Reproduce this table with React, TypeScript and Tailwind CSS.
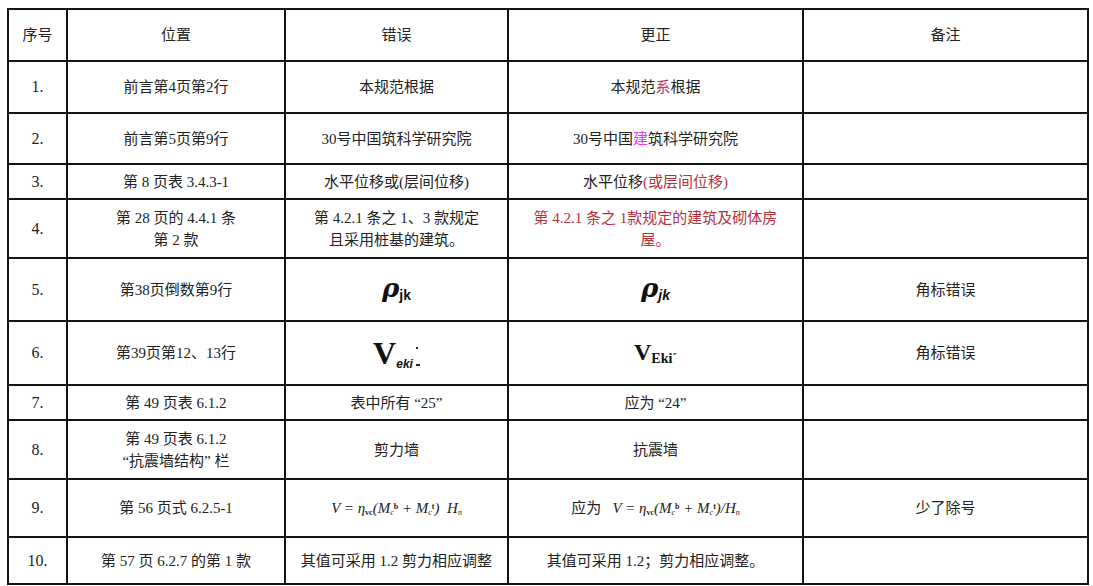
import React from 'react';

const red = 'text-[#b8303e]';

function Cell({ children, className = '' }: { children?: React.ReactNode; className?: string }) {
  return (
    <div className={`bg-white flex flex-col items-center justify-center text-center leading-[22px] ${className}`}>
      {children}
    </div>
  );
}

function Num({ n }: { n: string }) {
  return <Cell className="text-[16px] font-['Liberation_Serif',serif] text-[#222]">{n}</Cell>;
}

// V = η_vc (M_c^b + M_c^t) ... H_n, small italic serif
function ShearFormula({ slash }: { slash?: boolean }) {
  return (
    <span className="font-['Liberation_Serif',serif] italic text-[15px] text-[#222] whitespace-nowrap">
      V = η<sub className="text-[8px] not-italic font-bold">vc</sub>(M
      <sub className="text-[8px]">c</sub>
      <sup className="text-[8px] not-italic font-bold">b</sup> + M<sub className="text-[8px]">c</sub>
      <sup className="text-[8px] not-italic font-bold">t</sup>){slash ? '/' : '\u00a0\u00a0'}H
      <sub className="text-[8px]">n</sub>
    </span>
  );
}

export default function App() {
  return (
    <div className="min-h-screen bg-white pt-[8px] pl-[7px] font-['Liberation_Serif','Noto_Sans_CJK_SC',serif] text-[15px] text-[#222]">
      <div className="grid w-[1082px] grid-cols-[57px_216px_221px_293px_283px] grid-rows-[50px_50px_49px_33px_57px_61px_62px_33px_57px_56px_45px] gap-[2px] bg-[#151515] p-[2px]">
        {/* header */}
        <Cell>序号</Cell>
        <Cell>位置</Cell>
        <Cell>错误</Cell>
        <Cell>更正</Cell>
        <Cell>备注</Cell>

        {/* 1 */}
        <Num n="1." />
        <Cell>前言第4页第2行</Cell>
        <Cell>本规范根据</Cell>
        <Cell>
          <span>
            本规范<span className="text-[#c23256]">系</span>根据
          </span>
        </Cell>
        <Cell />

        {/* 2 */}
        <Num n="2." />
        <Cell>前言第5页第9行</Cell>
        <Cell>30号中国筑科学研究院</Cell>
        <Cell>
          <span>
            30号中国<span className="text-[#e040e8]">建</span>筑科学研究院
          </span>
        </Cell>
        <Cell />

        {/* 3 */}
        <Num n="3." />
        <Cell>第 8  页表 3.4.3-1</Cell>
        <Cell>水平位移或(层间位移)</Cell>
        <Cell>
          <span>
            水平位移<span className={red}>(或层间位移)</span>
          </span>
        </Cell>
        <Cell />

        {/* 4 */}
        <Num n="4." />
        <Cell>
          <span>第 28 页的 4.4.1 条</span>
          <span>第 2 款</span>
        </Cell>
        <Cell>
          <span>第 4.2.1 条之 1、3 款规定</span>
          <span>且采用桩基的建筑。</span>
        </Cell>
        <Cell className={red}>
          <span>第 4.2.1 条之 1款规定的建筑及砌体房</span>
          <span>屋。</span>
        </Cell>
        <Cell />

        {/* 5 */}
        <Num n="5." />
        <Cell>第38页倒数第9行</Cell>
        <Cell>
          <span className="whitespace-nowrap text-[#111]">
            <span className="font-['DejaVu_Serif',serif] italic font-bold text-[26px]">ρ</span>
            <sub className="font-['Liberation_Sans',sans-serif] font-bold text-[14px]">jk</sub>
          </span>
        </Cell>
        <Cell>
          <span className="whitespace-nowrap text-[#111]">
            <span className="font-['DejaVu_Serif',serif] italic font-bold text-[26px]">ρ</span>
            <sub className="font-['Liberation_Sans',sans-serif] italic font-bold text-[14px]">jk</sub>
          </span>
        </Cell>
        <Cell>角标错误</Cell>

        {/* 6 */}
        <Num n="6." />
        <Cell>第39页第12、13行</Cell>
        <Cell>
          <div className="flex items-end text-[#111]">
            <span className="font-['Liberation_Serif',serif] font-bold text-[32px] leading-[32px]">V</span>
            <span className="font-['Liberation_Sans',sans-serif] italic font-bold text-[12px] leading-[14px] -mb-[2px]">eki</span>
            <div className="ml-[3px] flex h-[22px] flex-col justify-between pb-[3px]">
              <div className="h-[2px] w-[2px] bg-[#222]" />
              <div className="h-[2px] w-[4px] bg-[#222]" />
            </div>
          </div>
        </Cell>
        <Cell>
          <span className="whitespace-nowrap text-[#111]">
            <span className="font-['Liberation_Serif',serif] font-bold text-[24px]">V</span>
            <sub className="font-['Liberation_Serif',serif] font-bold text-[14px]">Ekiˊ</sub>
          </span>
        </Cell>
        <Cell>角标错误</Cell>

        {/* 7 */}
        <Num n="7." />
        <Cell>第 49 页表 6.1.2</Cell>
        <Cell>表中所有 “25”</Cell>
        <Cell>应为 “24”</Cell>
        <Cell />

        {/* 8 */}
        <Num n="8." />
        <Cell>
          <span>第 49 页表 6.1.2</span>
          <span>“抗震墙结构” 栏</span>
        </Cell>
        <Cell>剪力墙</Cell>
        <Cell>抗震墙</Cell>
        <Cell />

        {/* 9 */}
        <Num n="9." />
        <Cell>第 56 页式 6.2.5-1</Cell>
        <Cell>
          <ShearFormula />
        </Cell>
        <Cell>
          <span className="whitespace-nowrap">
            应为&nbsp;&nbsp; <ShearFormula slash />
          </span>
        </Cell>
        <Cell>少了除号</Cell>

        {/* 10 */}
        <Num n="10." />
        <Cell>第 57 页 6.2.7 的第 1 款</Cell>
        <Cell className="whitespace-nowrap">其值可采用 1.2 剪力相应调整</Cell>
        <Cell>其值可采用 1.2；剪力相应调整。</Cell>
        <Cell />
      </div>
    </div>
  );
}
